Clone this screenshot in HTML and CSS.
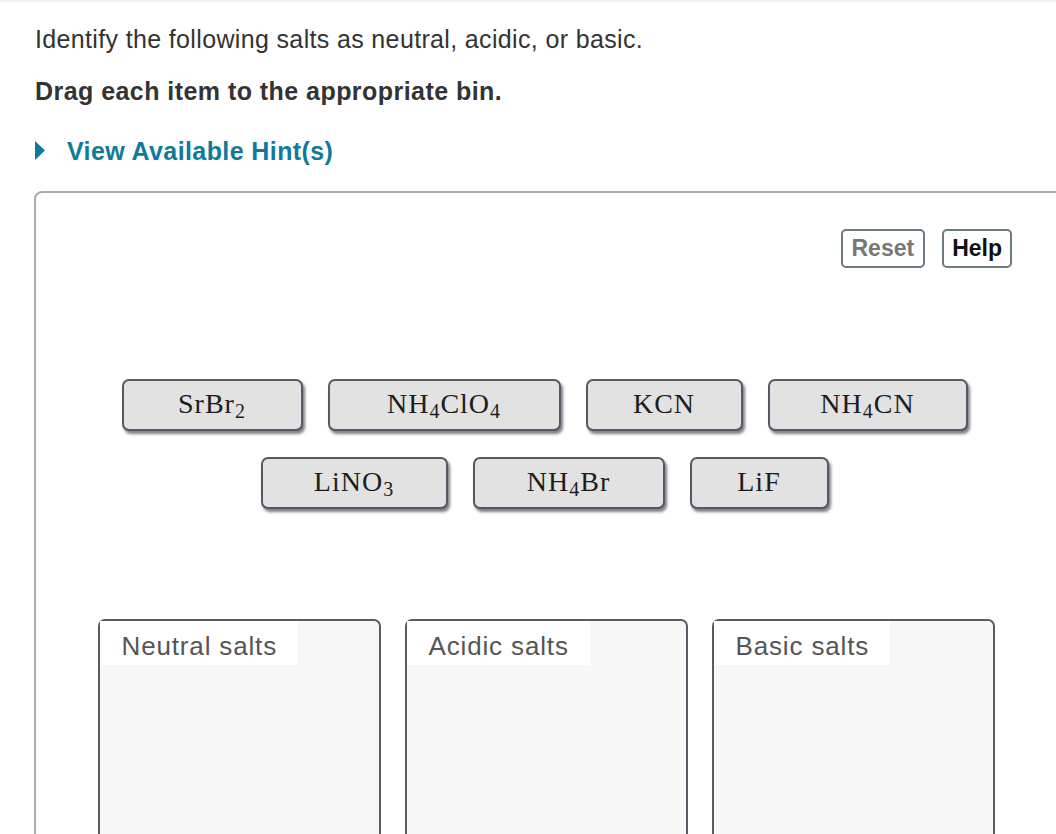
FILE: index.html
```html
<!DOCTYPE html>
<html lang="en">
<head>
<meta charset="utf-8">
<title>Identify salts</title>
<link rel="stylesheet" href="styles.css">
</head>
<body>
<div class="topline"></div>
<main class="page">
  <p class="intro">Identify the following salts as neutral, acidic, or basic.</p>
  <p class="instr">Drag each item to the appropriate bin.</p>
  <div class="hint">
    <svg class="caret" width="10" height="19" viewBox="0 0 10 19"><polygon points="0,0 10,9.5 0,19" fill="#0f7b99"/></svg>
    <span class="hint-text">View Available Hint(s)</span>
  </div>
  <section class="panel">
    <div class="toolbar">
      <button class="btn btn-reset">Reset</button>
      <button class="btn btn-help">Help</button>
    </div>
    <div class="tiles">
      <div class="tile tile-srbr2"><span class="formula">SrBr<sub>2</sub></span></div>
      <div class="tile tile-nh4clo4"><span class="formula">NH<sub>4</sub>ClO<sub>4</sub></span></div>
      <div class="tile tile-kcn"><span class="formula">KCN</span></div>
      <div class="tile tile-nh4cn"><span class="formula">NH<sub>4</sub>CN</span></div>
    </div>
    <div class="tiles tiles-2">
      <div class="tile tile-lino3"><span class="formula">LiNO<sub>3</sub></span></div>
      <div class="tile tile-nh4br"><span class="formula">NH<sub>4</sub>Br</span></div>
      <div class="tile tile-lif"><span class="formula">LiF</span></div>
    </div>
    <div class="bins">
      <div class="bin"><span class="bin-label">Neutral salts</span></div>
      <div class="bin"><span class="bin-label">Acidic salts</span></div>
      <div class="bin"><span class="bin-label">Basic salts</span></div>
    </div>
  </section>
</main>
</body>
</html>
```
FILE: styles.css
```css
html, body {
  margin: 0;
  padding: 0;
  background: #ffffff;
  overflow: hidden;
}
body {
  font-family: "Liberation Sans", Arial, sans-serif;
  color: #333333;
  height: 834px;
}
.topline {
  height: 2px;
  background: #f3f3f3;
}
.page {
  padding-left: 35px;
}
.intro {
  margin: 23px 0 0 0;
  font-size: 25px;
  line-height: 28px;
  letter-spacing: 0.35px;
  color: #333333;
}
.instr {
  margin: 24px 0 0 0;
  font-size: 25px;
  line-height: 28px;
  font-weight: bold;
  letter-spacing: 0.45px;
  color: #333333;
}
.hint {
  margin-top: 32px;
  display: flex;
  align-items: center;
  height: 28px;
}
.caret {
  display: block;
  margin-top: -2px;
}
.hint-text {
  margin-left: 22px;
  font-size: 25px;
  font-weight: bold;
  line-height: 28px;
  color: #0f7b99;
  letter-spacing: 0.4px;
}
.panel {
  margin: 26px 0 0 -1px;
  border-top: 2px solid #ababab;
  border-left: 2px solid #ababab;
  border-top-left-radius: 8px;
  padding-top: 36px;
  height: 800px;
}
.toolbar {
  display: flex;
  justify-content: flex-end;
  gap: 17px;
  padding-right: 44px;
}
.btn {
  height: 39px;
  box-sizing: border-box;
  border: 2px solid #6c7a81;
  border-radius: 5px;
  background: #ffffff;
  font-family: "Liberation Sans", Arial, sans-serif;
  font-size: 23px;
  font-weight: bold;
  padding: 0 9px;
  line-height: 35px;
}
.btn-reset {
  color: #777777;
}
.btn-help {
  color: #111111;
  padding: 0 8px;
}
.tiles {
  display: flex;
  justify-content: center;
  gap: 25px;
  margin-top: 111px;
  padding-right: 3px;
}
.tiles-2 {
  margin-top: 26px;
}
.tile {
  height: 52px;
  box-sizing: border-box;
  border: 2px solid #585864;
  border-radius: 7px;
  background: #e2e2e2;
  box-shadow: 2px 3px 3px rgba(40, 40, 50, 0.6);
  font-family: "Liberation Serif", "Times New Roman", serif;
  font-size: 28px;
  color: #1c1c1c;
  letter-spacing: 1px;
  display: flex;
  align-items: center;
  justify-content: center;
  padding-bottom: 2px;
}
.formula {
  display: block;
  line-height: 34px;
}
.formula sub {
  font-size: 20px;
  vertical-align: -5px;
  line-height: 0;
}
.tile-srbr2 { width: 181px; }
.tile-nh4clo4 { width: 233px; }
.tile-kcn { width: 157px; }
.tile-nh4cn { width: 200px; }
.tile-lino3 { width: 187px; }
.tile-nh4br { width: 192px; }
.tile-lif { width: 139px; }
.bins {
  display: flex;
  justify-content: center;
  gap: 24px;
  margin-top: 110px;
}
.bin {
  width: 283px;
  height: 260px;
  box-sizing: border-box;
  border: 2px solid #5a5a66;
  border-radius: 7px;
  background: #f7f7f7;
  align-self: flex-start;
}
.bin-label {
  display: inline-block;
  background: #ffffff;
  padding: 0 21px 0 22px;
  height: 44px;
  line-height: 50px;
  font-size: 26px;
  letter-spacing: 0.85px;
  color: #555555;
}
```
